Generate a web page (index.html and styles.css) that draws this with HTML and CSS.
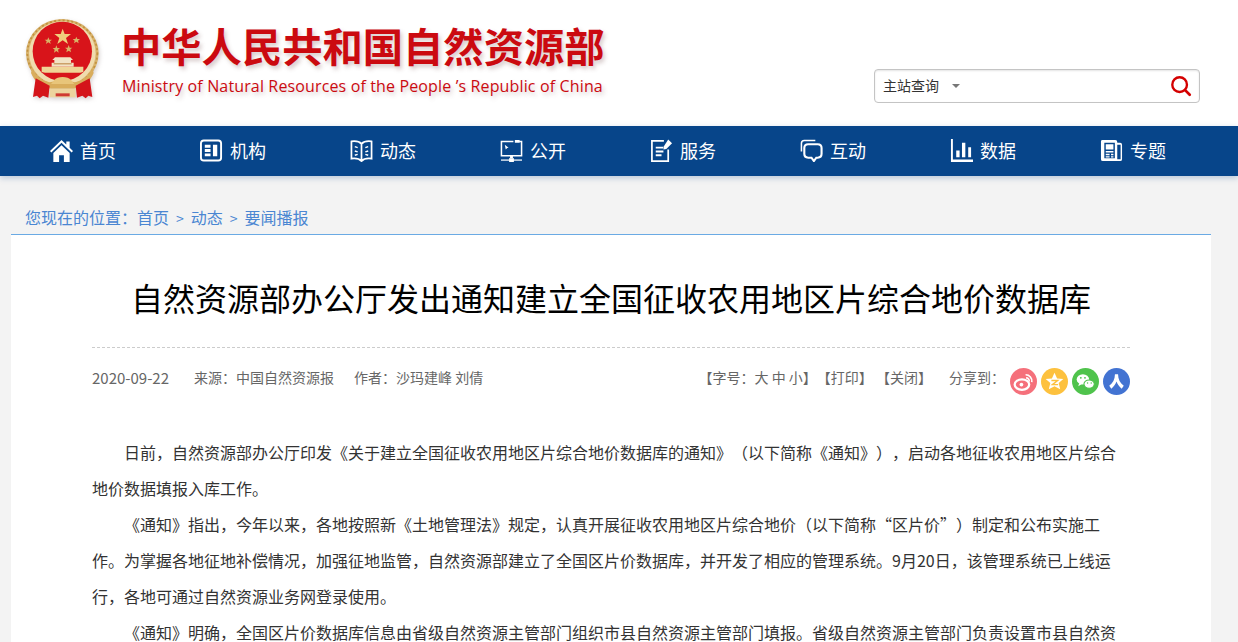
FILE: index.html
```html
<!DOCTYPE html>
<html lang="zh-CN">
<head>
  <meta charset="UTF-8">
  <title>自然资源部办公厅发出通知建立全国征收农用地区片综合地价数据库</title>
  <link rel="stylesheet" href="styles.css">
</head>
<body>
  <header class="top">
    <svg class="emblem" viewBox="0 0 300 300">
      <ellipse cx="142" cy="130" rx="109" ry="103" fill="#d8b36c"/>
      <ellipse cx="142" cy="130" rx="100" ry="96" fill="#f0dcae"/>
      <ellipse cx="142" cy="130" rx="105" ry="99" fill="none" stroke="#c2913f" stroke-width="5" stroke-dasharray="6 7"/>
      <circle cx="142" cy="124" r="89" fill="#d8141a"/>
      <polygon fill="#f0cf7c" points="143,56 149,72 168,72 153,84 159,102 143,91 127,102 133,84 118,72 137,72"/>
      <polygon fill="#d9b467" points="100,82 103,89 111,89 105,94 107,102 100,97 93,102 95,94 89,89 97,89"/>
      <polygon fill="#d9b467" points="184,80 187,87 195,87 189,92 191,100 184,95 177,100 179,92 173,87 181,87"/>
      <polygon fill="#d9b467" points="124,106 127,114 135,114 129,119 131,128 124,123 117,128 119,119 113,114 121,114"/>
      <polygon fill="#d9b467" points="161,105 164,113 172,113 166,118 168,127 161,122 154,127 156,118 150,113 158,113"/>
      <path fill="#f2e2c4" d="M120 142h46l8 8h-6v8h8v12h-66v-12h8v-8h-6z"/>
      <path fill="#b9813c" d="M116 160h54v3h-54z"/>
      <path fill="#efd596" d="M80 170h125v16l-10 2H90l-10-2z"/>
      <path fill="#d9ad5c" d="M52 175c12 26 30 38 52 42l38-8 38 8c22-4 40-16 52-42l4 14c-10 26-34 44-60 47h-68c-26-3-50-21-60-47z"/>
      <path fill="#d4141a" d="M62 205l42 22-4 36-16-6-10 8-8-8-12 4zM224 205l-42 22 4 36 16-6 10 8 8-8 12 4z"/>
      <path fill="#e8c57a" d="M118 210c8-12 42-12 50 0l10 12h-70z"/>
      <path fill="#ecd49e" d="M104 236h78v26h-78z"/>
      <path fill="#cf3a33" d="M122 250h42v9h-42z"/>
    </svg>
    <div class="brand">
      <div class="brand-cn">中华人民共和国自然资源部</div>
      <div class="brand-en">Ministry of Natural Resources of the People ’s Republic of China</div>
    </div>
    <div class="search">
      <span class="search-label">主站查询</span>
      <span class="search-arrow"></span>
      <svg class="search-icon" viewBox="0 0 24 24">
        <circle cx="10.500" cy="10.500" r="8" fill="none" stroke="#d40000" stroke-width="2.600"/>
        <path d="M16.500 16.500l5 5" stroke="#d40000" stroke-width="3" stroke-linecap="round"/>
      </svg>
    </div>
  </header>

  <nav class="nav">
    <a class="nav-item">
      <svg viewBox="0 0 24 24"><path fill="#fff" d="M12 1L0 12.500l1.400 1.500L12 4l10.600 10 1.400-1.500-3.500-3.400V2.500h-3.500v3.300zM3.500 14.500V24h6v-7h5v7h6v-9.500L12 6.500z"/></svg>
      首页
    </a>
    <a class="nav-item">
      <svg viewBox="0 0 24 24"><rect x="1" y="1.500" width="21" height="21" rx="3" fill="none" stroke="#fff" stroke-width="2"/><path fill="#fff" d="M5 6h6v3H5zM5 10.500h6v3H5zM5 15h6v3H5zM13.500 6H18v12h-4.500z"/></svg>
      机构
    </a>
    <a class="nav-item">
      <svg viewBox="0 0 24 24" fill="none" stroke="#fff" stroke-width="1.800"><path d="M12 5C9.500 2.500 5 2 1.500 2.500v18C5 20 9.500 20.500 12 23c2.500-2.500 7-3 10.500-2.500v-18C19 2 14.500 2.500 12 5zM12 5v18"/><path stroke-width="1.500" d="M5 8l3 1M5 12.500l3 1M5 17l3-1M19 8l-3 1M19 12.500l-3 1M19 17l-3-1"/></svg>
      动态
    </a>
    <a class="nav-item">
      <svg viewBox="0 0 24 24" fill="none" stroke="#fff" stroke-width="1.600"><path d="M14 2.500H1.500v15h21V2.500H20"/><path fill="#fff" stroke="none" d="M15.500 1h5v3h-5zM5 6l4 3-1.500.5L6 11zM10.500 17.500h3V20H10.500z"/><path d="M1 22h22" stroke-width="1.300"/><path fill="#fff" stroke="none" d="M9.500 20h5v4h-5z"/></svg>
      公开
    </a>
    <a class="nav-item">
      <svg viewBox="0 0 24 24" fill="none" stroke="#fff" stroke-width="1.800"><path d="M14.500 2H2v21h17V11"/><path stroke-width="2" d="M6 9h8M6 13h8M6 17h6"/><path fill="#fff" stroke="none" d="M19 .5l4 4-6 6-3 .5.500-3.500z"/></svg>
      服务
    </a>
    <a class="nav-item">
      <svg viewBox="0 0 24 24" fill="none" stroke="#fff"><path stroke-width="1.600" d="M1.500 13V4.500q0-3 3-3H16"/><path stroke-width="2.200" d="M8.500 5.500h10q4 0 4 4v6q0 4-4 4h-1.500L14.500 23 12 19.500H8.500q-4 0-4-4v-6q0-4 4-4z"/></svg>
      互动
    </a>
    <a class="nav-item">
      <svg viewBox="0 0 24 24"><path fill="#fff" d="M1 0h2v21.500h21V24H1zM6.500 12h3.500v7H6.500zM12.500 4H16v15h-3.500zM19 8.500h3V19h-3z"/></svg>
      数据
    </a>
    <a class="nav-item">
      <svg viewBox="0 0 24 24"><path fill="#fff" fill-rule="evenodd" d="M2.500 1h13.500q2 0 2 2v1h3q2 0 2 2v15q0 2-2 2H3q-2 0-2-2V2.500q0-1.500 1.500-1.500zM4.500 4v16h11V4zM18 6v15h3.500V6zM6 5.500h8V11H6zM6 12.500h8V14H6zM6 15.500h4V17H6zM11.500 15.500H14V17h-2.500zM6 18h4v1.200H6zM11.500 18H14v1.200h-2.500z"/></svg>
      专题
    </a>
  </nav>

  <div class="crumb">
    您现在的位置：<a>首页</a><span class="crumb-sep">&gt;</span><a>动态</a><span class="crumb-sep">&gt;</span><a>要闻播报</a>
  </div>

  <main class="article">
    <h1 class="article-title">自然资源部办公厅发出通知建立全国征收农用地区片综合地价数据库</h1>
    <div class="meta">
      <span class="meta-date">2020-09-22</span>
      <span class="meta-source">来源：中国自然资源报</span>
      <span class="meta-author">作者：沙玛建峰 刘倩</span>
      <span class="meta-tools">【字号：大 中 小】【打印】 【关闭】</span>
      <span class="meta-share">分享到：</span>
      <span class="share-icons">
        <svg class="share" viewBox="0 0 26 26"><circle cx="13" cy="13" r="13" fill="#f5707b"/><ellipse cx="11.500" cy="16" rx="7" ry="5" fill="none" stroke="#fff" stroke-width="2.200"/><circle cx="11" cy="16" r="1.800" fill="#fff"/><path d="M15 6.500a6 6 0 0 1 6 7M15.500 9.500a3 3 0 0 1 3 3.500" fill="none" stroke="#fff" stroke-width="1.600"/></svg>
        <svg class="share" viewBox="0 0 26 26"><circle cx="13" cy="13" r="13" fill="#fdc13e"/><polygon points="13,4.500 15.500,10 21.500,10.500 17,14.500 18.500,20.500 13,17.500 7.500,20.500 9,14.500 4.500,10.500 10.500,10" fill="#fff"/><path d="M10 12h6l-5 4h5.500" fill="none" stroke="#fdc13e" stroke-width="1.400"/></svg>
        <svg class="share" viewBox="0 0 26 26"><circle cx="13" cy="13" r="13" fill="#4fc34c"/><ellipse cx="10.500" cy="11" rx="6" ry="5" fill="#fff"/><path d="M7 14.500l-1 3 3.500-2z" fill="#fff"/><ellipse cx="16.500" cy="15.500" rx="5" ry="4" fill="#fff" stroke="#4fc34c"/><circle cx="8.500" cy="9.500" r=".9" fill="#4fc34c"/><circle cx="12.500" cy="9.500" r=".9" fill="#4fc34c"/><circle cx="15" cy="14.500" r=".7" fill="#4fc34c"/><circle cx="18.500" cy="14.500" r=".7" fill="#4fc34c"/></svg>
        <svg class="share" viewBox="0 0 26 26"><circle cx="13" cy="13" r="13" fill="#4273d2"/><path d="M11.500 6h3c0 5 2 8.500 5.500 11l-2 3c-2.500-2-4-4.500-5-7-1 2.500-2.500 5-5 7l-2-3c3.500-2.500 5.500-6 5.500-11z" fill="#fff"/></svg>
      </span>
    </div>
    <div class="content">
      <p>日前，自然资源部办公厅印发《关于建立全国征收农用地区片综合地价数据库的通知》（以下简称《通知》），启动各地征收农用地区片综合地价数据填报入库工作。</p>
      <p>《通知》指出，今年以来，各地按照新《土地管理法》规定，认真开展征收农用地区片综合地价（以下简称“区片价”）制定和公布实施工作。为掌握各地征地补偿情况，加强征地监管，自然资源部建立了全国区片价数据库，并开发了相应的管理系统。9月20日，该管理系统已上线运行，各地可通过自然资源业务网登录使用。</p>
      <p>《通知》明确，全国区片价数据库信息由省级自然资源主管部门组织市县自然资源主管部门填报。省级自然资源主管部门负责设置市县自然资</p>
    </div>
  </main>
</body>
</html>
```

FILE: styles.css
```css
html, body {
  padding: 0;
  margin: 0;
}

body {
  height: 642px;
  overflow: hidden;
  background: #f3f3f3;
  font-family: "Noto Sans CJK SC", "Liberation Sans", sans-serif;
  color: #333;
  text-spacing-trim: space-all;
}

.top {
  display: flex;
  align-items: flex-start;
  height: 126px;
  padding: 10px 38px 0 15px;
  box-sizing: border-box;
  background: #fff;
}

.emblem {
  flex: none;
  width: 100px;
  height: 100px;
  filter: blur(0.4px) drop-shadow(1px 2px 2px rgba(90, 70, 70, 0.25));
}

.brand {
  margin: 6px 0 0 6px;
  color: #cb0a10;
  text-shadow: 2px 3px 4px rgba(120, 80, 80, 0.3);
}

.brand-cn {
  font-size: 40.3px;
  font-weight: 700;
  line-height: 58px;
  white-space: nowrap;
}

.brand-en {
  padding-left: 1px;
  font-family: "Open Sans", sans-serif;
  font-size: 16px;
  letter-spacing: 0.14px;
  line-height: 24px;
  white-space: nowrap;
}

.search {
  display: flex;
  align-items: center;
  width: 326px;
  height: 34px;
  margin: 59px 0 0 auto;
  padding: 0 7px 0 8px;
  box-sizing: border-box;
  border: 1px solid #c4c4c4;
  border-radius: 4px;
  box-shadow: inset 0 1px 2px #e4e4e4;
  background: #fff;
}

.search-label {
  margin-top: -2px;
  font-size: 14px;
  color: #333;
}

.search-arrow {
  width: 0;
  height: 0;
  margin: 0 0 0 13px;
  border: 4px solid transparent;
  border-top-color: #777;
  border-bottom: 0;
}

.search-icon {
  width: 22px;
  height: 22px;
  margin-left: auto;
}

.nav {
  display: flex;
  height: 50px;
  padding: 0 0 2px 50px;
  box-sizing: border-box;
  background: #07458a;
  box-shadow: 0 2px 6px rgba(7, 69, 138, 0.25);
}

.nav-item {
  display: flex;
  flex: none;
  align-items: center;
  gap: 7px;
  width: 150px;
  font-size: 18px;
  color: #fff;
}

.nav-item svg {
  flex: none;
  width: 23px;
  height: 23px;
}

.crumb {
  height: 29px;
  padding: 29px 0 0 25px;
  font-size: 16px;
  line-height: 24px;
  color: #4a86d2;
}

.crumb-sep {
  margin: 0 7px;
  font-size: 14px;
}

.article {
  height: 500px;
  margin: 0 27px 0 11px;
  padding: 36px 81px 0;
  border-top: 1px solid #6aaae4;
  background: #fff;
}

.article-title {
  margin: 0;
  padding-bottom: 24px;
  border-bottom: 1px dashed #ccc;
  font-size: 32px;
  font-weight: 400;
  line-height: 52px;
  text-align: center;
  color: #000;
}

.meta {
  display: flex;
  align-items: center;
  height: 30px;
  margin-top: 14px;
  font-size: 14px;
  color: #666;
}

.meta-date {
  font-size: 15px;
}

.meta-source {
  margin-left: 25px;
}

.meta-author {
  margin-left: 20px;
}

.meta-tools {
  margin-left: auto;
}

.meta-share {
  margin-left: 17px;
}

.share-icons {
  display: flex;
  gap: 4px;
  margin: 9px 0 0 5px;
}

.share {
  width: 27px;
  height: 27px;
}

.content {
  margin-top: 42px;
  font-size: 16px;
  line-height: 36px;
  color: #333;
}

.content p {
  margin: 0;
  text-indent: 2em;
}
```
